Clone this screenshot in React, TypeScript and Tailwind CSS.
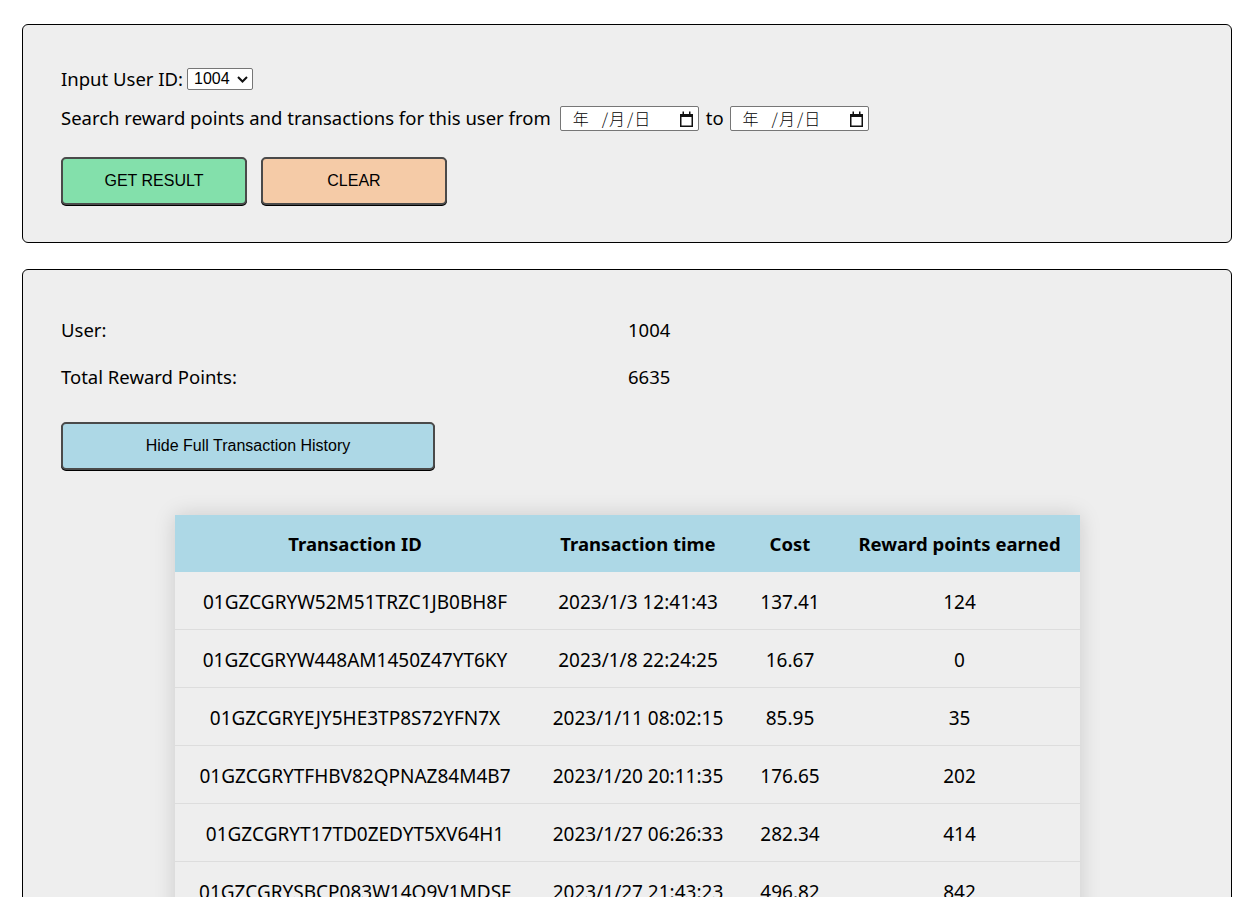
import React from "react";

type Tx = {
  id: string;
  time: string;
  cost: string;
  points: number;
};

const transactions: Tx[] = [
  { id: "01GZCGRYW52M51TRZC1JB0BH8F", time: "2023/1/3 12:41:43", cost: "137.41", points: 124 },
  { id: "01GZCGRYW448AM1450Z47YT6KY", time: "2023/1/8 22:24:25", cost: "16.67", points: 0 },
  { id: "01GZCGRYEJY5HE3TP8S72YFN7X", time: "2023/1/11 08:02:15", cost: "85.95", points: 35 },
  { id: "01GZCGRYTFHBV82QPNAZ84M4B7", time: "2023/1/20 20:11:35", cost: "176.65", points: 202 },
  { id: "01GZCGRYT17TD0ZEDYT5XV64H1", time: "2023/1/27 06:26:33", cost: "282.34", points: 414 },
  { id: "01GZCGRYSBCP083W14Q9V1MDSF", time: "2023/1/27 21:43:23", cost: "496.82", points: 842 },
];

const CalendarIcon = () => (
  <svg width="13" height="16" viewBox="0 0 13 16" className="block">
    <rect x="2.5" y="0.5" width="1.5" height="3" fill="#111" />
    <rect x="9" y="0.5" width="1.5" height="3" fill="#111" />
    <rect x="0.75" y="3.75" width="11.5" height="11.5" fill="none" stroke="#111" strokeWidth="1.5" />
    <rect x="0.75" y="3" width="11.5" height="3" fill="#111" />
  </svg>
);

// fake date input so the placeholder stays in the same locale as the reference
const DateBox = () => (
  <div className="relative flex h-[25px] w-[139px] items-center rounded-[2px] border border-[#767676] bg-white font-['Noto_Sans_CJK_SC',sans-serif] text-[16px] font-light leading-none text-black">
    <span className="ml-[12px]">年</span>
    <span className="ml-[13px]">/</span>
    <span className="ml-[1px]">月</span>
    <span className="ml-[2px]">/</span>
    <span className="ml-[1px]">日</span>
    <span className="absolute right-[5px] top-[4px]">
      <CalendarIcon />
    </span>
  </div>
);

const UserSelect = () => (
  <div className="flex h-[22px] w-[66px] items-center rounded-[2px] border border-[#767676] bg-white pl-[6px] font-['Liberation_Sans',Arial,sans-serif] text-[16px] leading-none text-black">
    <span>1004</span>
    <svg width="11" height="7" viewBox="0 0 11 7" className="ml-[7px]">
      <path d="M1 1 L5.5 5.5 L10 1" fill="none" stroke="#111" strokeWidth="2" />
    </svg>
  </div>
);

const App: React.FC = () => {
  return (
    <div className="min-h-[897px] bg-white pt-[24px] font-['Noto_Sans',sans-serif] text-[18.5px] text-black">
      {/* search panel */}
      <div className="ml-[22px] mr-[25px] rounded-[6px] border border-black bg-[#eeeeee] pb-[37px] pl-[38px] pt-[41px]">
        <div className="flex h-[26px] items-center">
          <span>Input User ID:</span>
          <span className="ml-[4px]">
            <UserSelect />
          </span>
        </div>
        <div className="mt-[13px] flex h-[26px] items-center">
          <span>Search reward points and transactions for this user from</span>
          <span className="ml-[9px]">
            <DateBox />
          </span>
          <span className="ml-[7px] mr-[6px]">to</span>
          <DateBox />
        </div>
        <div className="mt-[26px] flex gap-[14px] font-['Liberation_Sans',Arial,sans-serif] text-[16px]">
          <button className="h-[48px] w-[186px] rounded-[5px] border-2 border-[#4a4a4a] bg-[#83e0ab] text-black shadow-[0_1px_0_#000]">
            GET RESULT
          </button>
          <button className="h-[48px] w-[186px] rounded-[5px] border-2 border-[#4a4a4a] bg-[#f5cba7] text-black shadow-[0_1px_0_#000]">
            CLEAR
          </button>
        </div>
      </div>

      {/* result panel */}
      <div className="ml-[22px] mr-[25px] mt-[26px] rounded-[6px] border border-black bg-[#eeeeee] pb-[40px] pl-[38px] pt-[47px]">
        <div className="flex h-[26px] items-center">
          <span className="w-[567px]">User:</span>
          <span>1004</span>
        </div>
        <div className="mt-[21px] flex h-[26px] items-center">
          <span className="w-[567px]">Total Reward Points:</span>
          <span>6635</span>
        </div>
        <button className="mt-[32px] h-[48px] w-[374px] rounded-[5px] border-2 border-[#4a4a4a] bg-[#add8e6] font-['Liberation_Sans',Arial,sans-serif] text-[16px] text-black shadow-[0_1px_0_#000]">
          Hide Full Transaction History
        </button>

        <div className="mt-[45px] ml-[114px] w-[905px] shadow-[0_0_20px_rgba(0,0,0,0.15)]">
          <div className="grid h-[57px] grid-cols-[360px_206px_98px_241px] items-center bg-[#add8e6] text-center font-bold">
            <div>Transaction ID</div>
            <div>Transaction time</div>
            <div>Cost</div>
            <div>Reward points earned</div>
          </div>
          {transactions.map((tx) => (
            <div
              key={tx.id}
              className="grid h-[58px] grid-cols-[360px_206px_98px_241px] items-center border-b border-[#dddddd] bg-[#eeeeee] pt-[4px] text-center text-[19px]"
            >
              <div>{tx.id}</div>
              <div>{tx.time}</div>
              <div>{tx.cost}</div>
              <div>{tx.points}</div>
            </div>
          ))}
        </div>
      </div>
    </div>
  );
};

export default App;
